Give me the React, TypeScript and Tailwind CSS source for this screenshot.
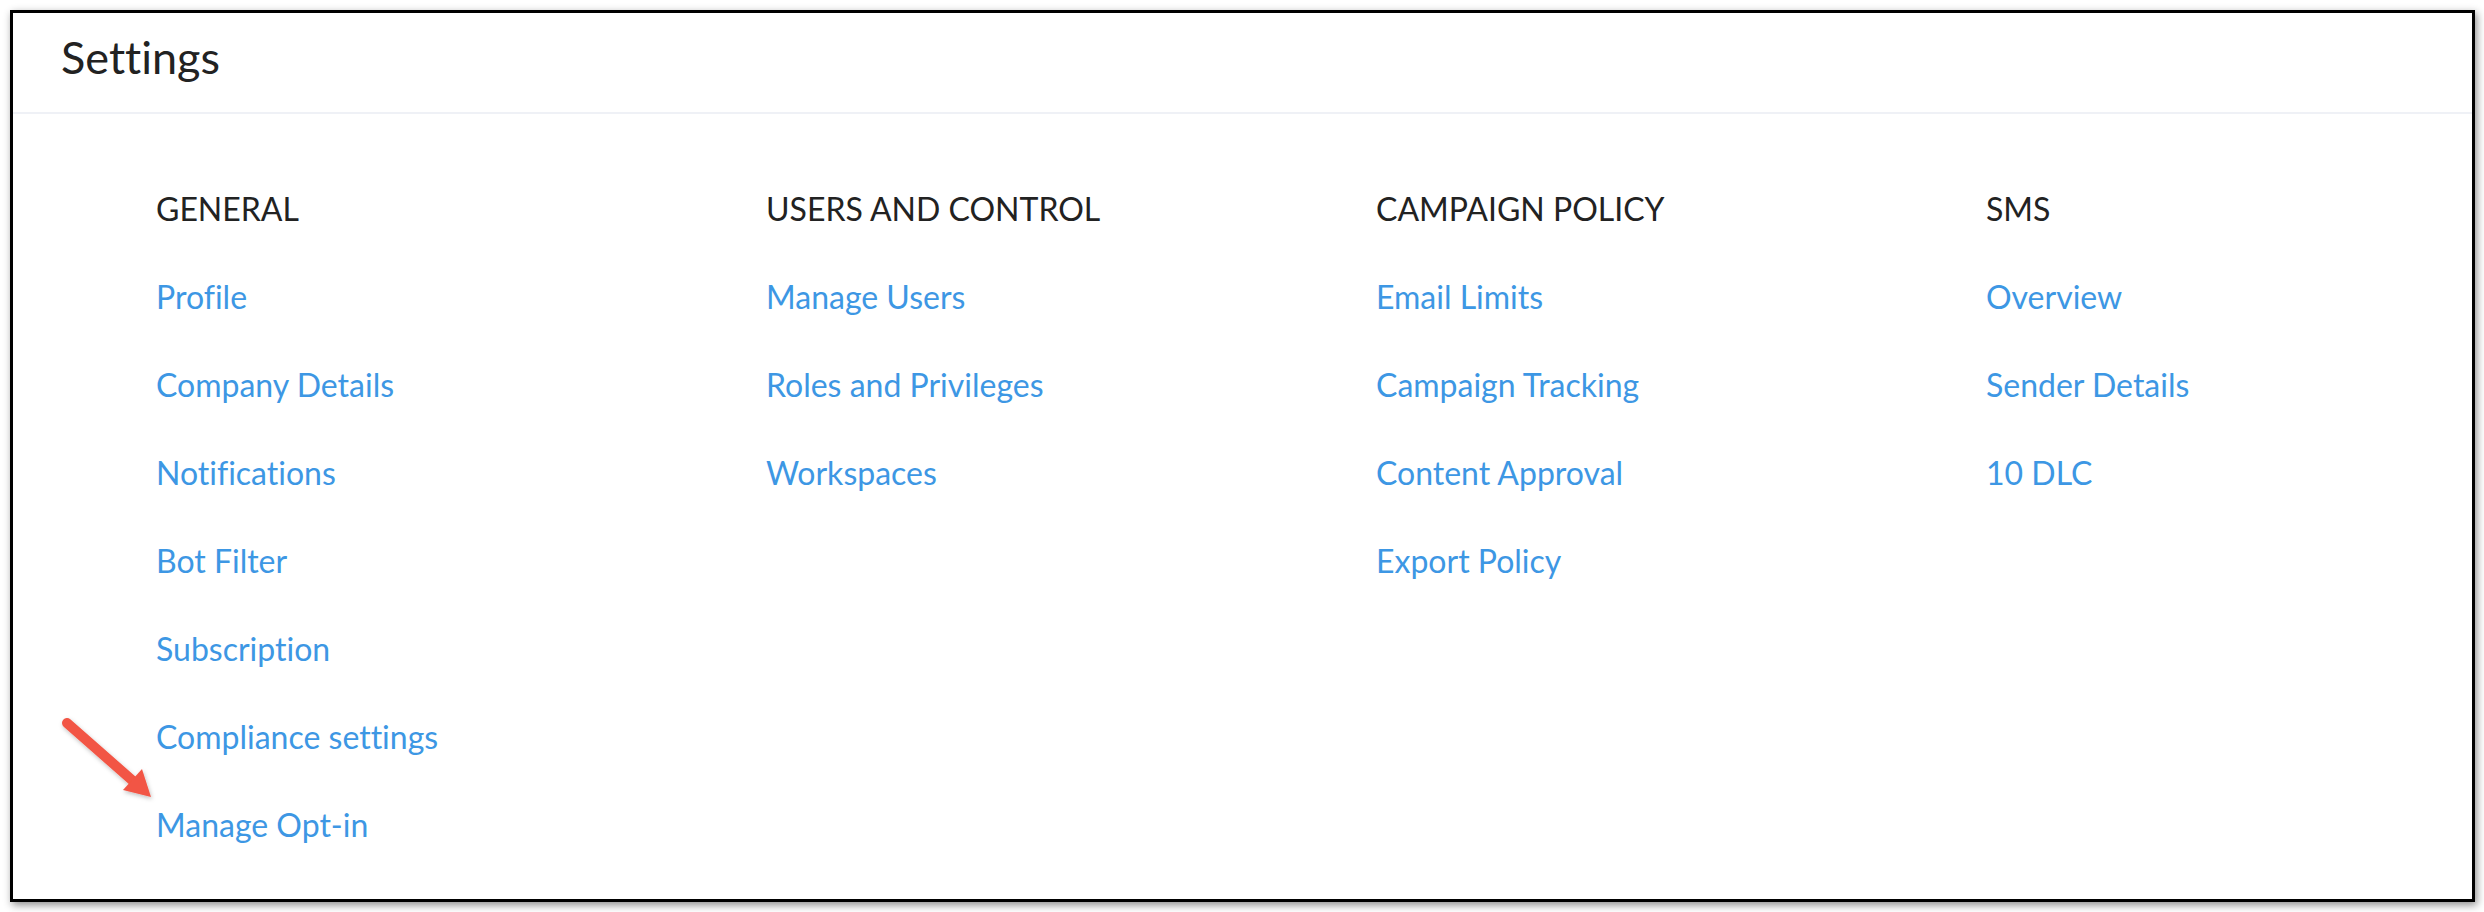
import React from "react";

const sections = [
  {
    title: "GENERAL",
    links: ["Profile", "Company Details", "Notifications", "Bot Filter", "Subscription", "Compliance settings", "Manage Opt-in"],
  },
  {
    title: "USERS AND CONTROL",
    links: ["Manage Users", "Roles and Privileges", "Workspaces"],
  },
  {
    title: "CAMPAIGN POLICY",
    links: ["Email Limits", "Campaign Tracking", "Content Approval", "Export Policy"],
  },
  {
    title: "SMS",
    links: ["Overview", "Sender Details", "10 DLC"],
  },
];

export default function App() {
  return (
    <div className="relative h-[912px] w-[2484px] bg-white pt-[10px] pl-[10px] font-['Lato','Noto_Sans',sans-serif] [font-variant-ligatures:none]">
      <div className="flex h-[892px] w-[2465px] flex-col border-[3px] border-black bg-white shadow-[2px_3px_8px_rgba(0,0,0,0.45)]">
        <div className="border-b-2 border-[#eff1f6] pt-[17px] pb-[28px] pl-[48px]">
          <h1 className="text-[45px] leading-[1.2] text-[#222]">Settings</h1>
        </div>
        <div className="grid grid-cols-[610px_610px_610px_610px] pt-[51px] pl-[143px]">
          {sections.map(s => (
            <div key={s.title} className="flex flex-col text-[32px] leading-[88px]">
              <div className="text-[#222]">{s.title}</div>
              {s.links.map(l => (
                <a key={l} className="w-fit cursor-pointer text-[#3d97e4]">
                  {l}
                </a>
              ))}
            </div>
          ))}
        </div>
      </div>

      {/* annotation arrow */}
      <svg className="pointer-events-none absolute top-0 left-0" width="200" height="840" viewBox="0 0 200 840">
        <defs>
          <filter id="sh" x="-20%" y="-20%" width="140%" height="140%">
            <feDropShadow dx="1" dy="2" stdDeviation="2" floodColor="#000" floodOpacity="0.25" />
          </filter>
        </defs>
        <g filter="url(#sh)">
          <line x1="67" y1="723" x2="133" y2="781" stroke="#f25544" strokeWidth="10" strokeLinecap="round" />
          <polygon points="151,797 142,769 123,790" fill="#f25544" />
        </g>
      </svg>
    </div>
  );
}
